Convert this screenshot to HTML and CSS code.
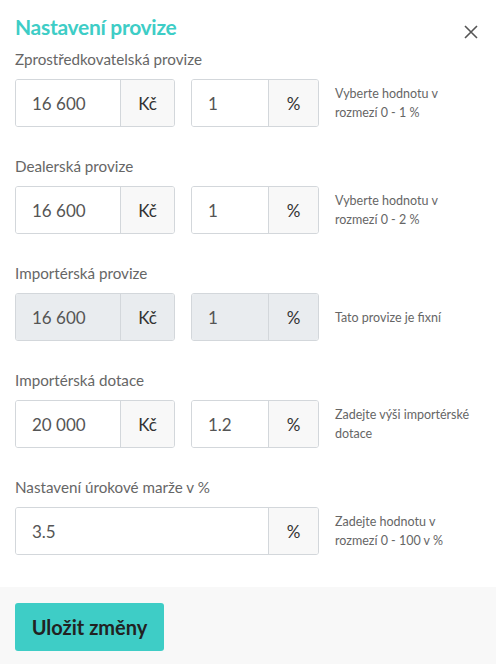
FILE: index.html
```html
<!DOCTYPE html>
<html lang="cs">
<head>
<meta charset="utf-8">
<link rel="stylesheet" href="styles.css">
</head>
<body>
<div class="modal">
  <div class="body">
    <div class="header">
      <h1 class="title">Nastavení provize</h1>
      <button class="close" aria-label="Zavřít">
        <svg width="14" height="14" viewBox="0 0 14 14"><path d="M1 1L13 13M13 1L1 13" stroke="#555" stroke-width="1.6" fill="none"/></svg>
      </button>
    </div>

    <div class="field">
      <div class="label">Zprostředkovatelská provize</div>
      <div class="row">
        <div class="group g-kc"><div class="input">16 600</div><div class="addon">Kč</div></div>
        <div class="group g-pct"><div class="input">1</div><div class="addon">%</div></div>
        <div class="help">Vyberte hodnotu v<br>rozmezí 0 - 1 %</div>
      </div>
    </div>

    <div class="field">
      <div class="label">Dealerská provize</div>
      <div class="row">
        <div class="group g-kc"><div class="input">16 600</div><div class="addon">Kč</div></div>
        <div class="group g-pct"><div class="input">1</div><div class="addon">%</div></div>
        <div class="help">Vyberte hodnotu v<br>rozmezí 0 - 2 %</div>
      </div>
    </div>

    <div class="field">
      <div class="label">Importérská provize</div>
      <div class="row">
        <div class="group g-kc disabled"><div class="input">16 600</div><div class="addon">Kč</div></div>
        <div class="group g-pct disabled"><div class="input">1</div><div class="addon">%</div></div>
        <div class="help">Tato provize je fixní</div>
      </div>
    </div>

    <div class="field">
      <div class="label">Importérská dotace</div>
      <div class="row">
        <div class="group g-kc"><div class="input">20 000</div><div class="addon">Kč</div></div>
        <div class="group g-pct"><div class="input">1.2</div><div class="addon">%</div></div>
        <div class="help">Zadejte výši importérské<br>dotace</div>
      </div>
    </div>

    <div class="field last">
      <div class="label">Nastavení úrokové marže v %</div>
      <div class="row">
        <div class="group g-wide"><div class="input">3.5</div><div class="addon">%</div></div>
        <div class="help">Zadejte hodnotu v<br>rozmezí 0 - 100 v %</div>
      </div>
    </div>
  </div>
  <div class="footer">
    <button class="save">Uložit změny</button>
  </div>
</div>
</body>
</html>
```
FILE: styles.css
```css
* { box-sizing: border-box; }
html, body { margin: 0; padding: 0; background: #fff; }
body { font-family: "Lato", "Noto Sans", sans-serif; color: #444; }
.modal { width: 496px; height: 664px; display: flex; flex-direction: column; }
.body { padding: 13px 15px 0; flex: 1; }
.header { display: flex; justify-content: space-between; align-items: flex-start; }
.title { margin: 0; font-size: 21px; line-height: 28px; font-weight: 700; color: #3ecdc6; letter-spacing: -0.3px; }
.close { border: 0; background: none; padding: 0; margin: 12px 3px 0 0; width: 14px; height: 14px; display: flex; }
.field { margin-bottom: 29px; }
.field.last { margin-bottom: 0; }
.label { font-size: 15.2px; line-height: 20px; color: #666; margin: 8px 0 10px; }
.field + .field .label { margin-top: 0; }
.row { display: flex; align-items: center; gap: 16px; }
.group { display: flex; height: 48px; border: 1px solid #d3d7db; border-radius: 3px; overflow: hidden; }
.g-kc { width: 160px; }
.g-pct { width: 128px; }
.g-wide { width: 304px; }
.input { flex: 1; display: flex; align-items: center; padding-left: 16px; font-size: 17px; color: #555; background: #fff; }
.addon { display: flex; align-items: center; justify-content: center; border-left: 1px solid #d3d7db; background: #f8f8f8; font-size: 17px; color: #333; }
.g-kc .addon { width: 54px; }
.g-pct .addon, .g-wide .addon { width: 50px; }
.disabled .input, .disabled .addon { background: #e9ecef; }
.help { font-size: 12.5px; line-height: 19px; color: #666; }
.footer { background: #f8f8f8; height: 77px; padding: 16px 15px; }
.save { border: 0; border-radius: 3px; background: #3ecdc6; color: #222; font-family: inherit; font-weight: 700; font-size: 20px; width: 149px; height: 48px; padding: 0; }
```
